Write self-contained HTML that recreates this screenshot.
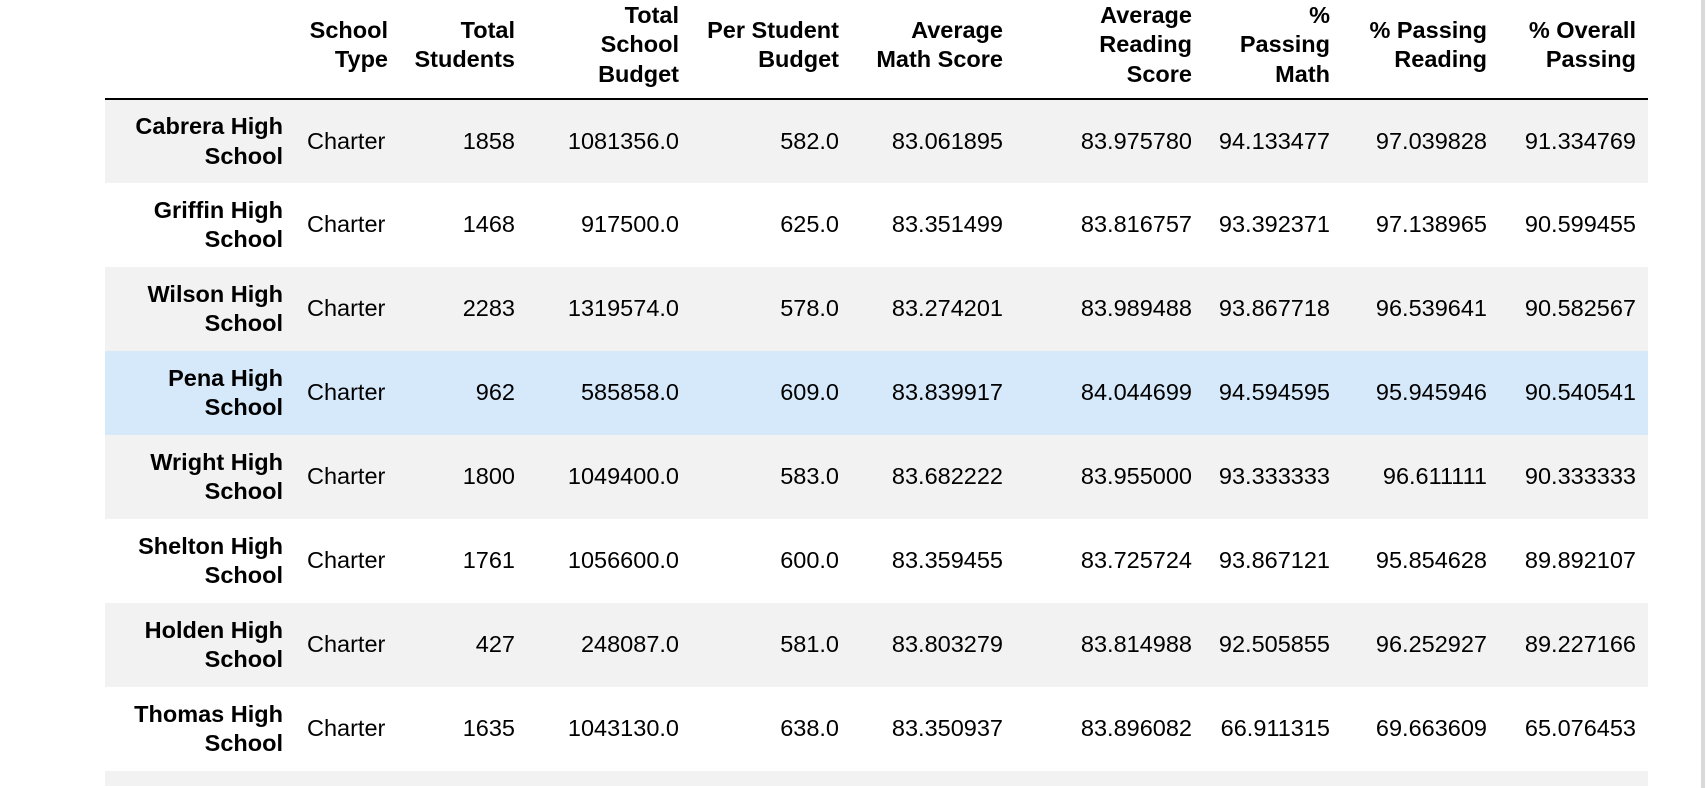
<!DOCTYPE html>
<html><head><meta charset="utf-8"><style>
html,body{margin:0;padding:0;background:#fff;width:1706px;height:788px;overflow:hidden;position:relative}
body{font-family:"Liberation Sans",Helvetica,Arial,sans-serif;font-size:23.5px;color:#000}
table{position:absolute;left:105px;top:0;border-collapse:collapse;table-layout:fixed;width:1543px}
th,td{padding:0 12px;text-align:right;vertical-align:middle;line-height:29.4px;white-space:nowrap}
thead th{height:99px;font-weight:bold;border-bottom:2px solid #000;box-sizing:border-box;padding-bottom:8px}
tbody tr{height:84px}
tbody tr.last{height:15px}
tbody th{font-weight:bold}
tbody tr:nth-child(odd){background:#f2f2f2}
tbody tr.hl{background:#d6e9fa}
td.l{text-align:left}
.bar{position:absolute;left:1701px;top:0;width:4px;height:788px;background:#d9d9d9}
</style></head><body>
<table>
<colgroup><col style="width:190px"><col style="width:105px"><col style="width:127px"><col style="width:164px"><col style="width:160px"><col style="width:164px"><col style="width:189px"><col style="width:138px"><col style="width:157px"><col style="width:149px"></colgroup>
<thead><tr><th></th><th>School<br>Type</th><th>Total<br>Students</th><th>Total<br>School<br>Budget</th><th>Per Student<br>Budget</th><th>Average<br>Math Score</th><th>Average<br>Reading<br>Score</th><th>%<br>Passing<br>Math</th><th>% Passing<br>Reading</th><th>% Overall<br>Passing</th></tr></thead>
<tbody>
<tr><th>Cabrera High<br>School</th><td class="l">Charter</td><td>1858</td><td>1081356.0</td><td>582.0</td><td>83.061895</td><td>83.975780</td><td>94.133477</td><td>97.039828</td><td>91.334769</td></tr>
<tr><th>Griffin High<br>School</th><td class="l">Charter</td><td>1468</td><td>917500.0</td><td>625.0</td><td>83.351499</td><td>83.816757</td><td>93.392371</td><td>97.138965</td><td>90.599455</td></tr>
<tr><th>Wilson High<br>School</th><td class="l">Charter</td><td>2283</td><td>1319574.0</td><td>578.0</td><td>83.274201</td><td>83.989488</td><td>93.867718</td><td>96.539641</td><td>90.582567</td></tr>
<tr class="hl"><th>Pena High<br>School</th><td class="l">Charter</td><td>962</td><td>585858.0</td><td>609.0</td><td>83.839917</td><td>84.044699</td><td>94.594595</td><td>95.945946</td><td>90.540541</td></tr>
<tr><th>Wright High<br>School</th><td class="l">Charter</td><td>1800</td><td>1049400.0</td><td>583.0</td><td>83.682222</td><td>83.955000</td><td>93.333333</td><td>96.611111</td><td>90.333333</td></tr>
<tr><th>Shelton High<br>School</th><td class="l">Charter</td><td>1761</td><td>1056600.0</td><td>600.0</td><td>83.359455</td><td>83.725724</td><td>93.867121</td><td>95.854628</td><td>89.892107</td></tr>
<tr><th>Holden High<br>School</th><td class="l">Charter</td><td>427</td><td>248087.0</td><td>581.0</td><td>83.803279</td><td>83.814988</td><td>92.505855</td><td>96.252927</td><td>89.227166</td></tr>
<tr><th>Thomas High<br>School</th><td class="l">Charter</td><td>1635</td><td>1043130.0</td><td>638.0</td><td>83.350937</td><td>83.896082</td><td>66.911315</td><td>69.663609</td><td>65.076453</td></tr>
<tr class="last"><th></th><td></td><td></td><td></td><td></td><td></td><td></td><td></td><td></td><td></td></tr>
</tbody></table>
<div class="bar"></div>
</body></html>
